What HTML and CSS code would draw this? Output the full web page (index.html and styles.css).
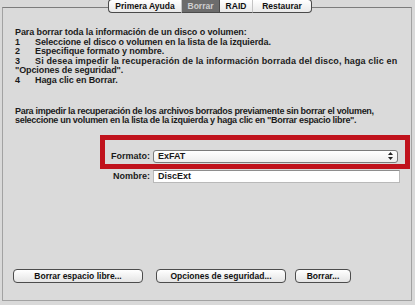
FILE: index.html
```html
<!DOCTYPE html>
<html lang="es">

<head>
    <meta charset="UTF-8">
    <title>Borrar</title>
    <link rel="stylesheet" href="styles.css">
</head>

<body>
    <div class="panel">
        <!-- segmented tabs sit on the top border -->
        <div class="tabs">
            <span class="tab tab-first">Primera Ayuda</span>
            <span class="tab tab-selected">Borrar</span>
            <span class="tab tab-raid">RAID</span>
            <span class="tab tab-last">Restaurar</span>
        </div>

        <div class="info">
            <div class="line">Para borrar toda la información de un disco o volumen:</div>
            <div class="line"><span class="num">1</span>Seleccione el disco o volumen en la lista de la izquierda.</div>
            <div class="line"><span class="num">2</span>Especifique formato y nombre.</div>
            <div class="line line-wide"><span class="num">3</span>Si desea impedir la recuperación de la información borrada del disco, haga clic en</div>
            <div class="line">"Opciones de seguridad".</div>
            <div class="line"><span class="num">4</span>Haga clic en Borrar.</div>
        </div>

        <div class="info info-second">
            <div class="line line-tight">Para impedir la recuperación de los archivos borrados previamente sin borrar el volumen,</div>
            <div class="line line-tight">seleccione un volumen en la lista de la izquierda y haga clic en "Borrar espacio libre".</div>
        </div>

        <div class="form">
            <div class="highlight">
                <div class="row">
                    <label class="label">Formato:</label>
                    <div class="select">
                        <span>ExFAT</span>
                        <svg class="arrows" width="5" height="8" viewBox="0 0 5 8">
                            <path d="M0 3 L2.5 0 L5 3 Z" fill="#222" />
                            <path d="M0 5 L2.5 8 L5 5 Z" fill="#222" />
                        </svg>
                    </div>
                </div>
            </div>
            <div class="row row-name">
                <label class="label">Nombre:</label>
                <div class="input">DiscExt</div>
            </div>
        </div>

        <div class="buttons">
            <button class="btn btn-wide">Borrar espacio libre...</button>
            <button class="btn btn-wide">Opciones de seguridad...</button>
            <button class="btn btn-small">Borrar...</button>
        </div>
    </div>
</body>

</html>
```

FILE: styles.css
```css
* {
    margin: 0;
    padding: 0;
    box-sizing: border-box;
}

body {
    width: 415px;
    height: 305px;
    overflow: hidden;
    background-color: #d9d9d9;
    font-family: "Liberation Sans", Arial, sans-serif;
    font-size: 9px;
    font-weight: bold;
    color: #1a1a1a;
}

.panel {
    display: flex;
    flex-direction: column;
    height: 294px;
    margin: 7px 3px 0 2px;
    border: 1px solid #a2a2a2;
    border-top-color: #7c7c7c;
    background-color: #dadada;
}

.tabs {
    display: flex;
    height: 14px;
    margin-top: -9px;
    margin-left: 105px;
}

.tab {
    display: flex;
    align-items: center;
    justify-content: center;
    height: 14px;
    border-top: 1px solid #4a4a4a;
    border-bottom: 1px solid #4a4a4a;
    border-right: 1px solid #c4c4c4;
    background: linear-gradient(#ffffff, #e9e9e9);
    color: #111;
    font-size: 8.5px;
}

.tab-first {
    width: 74px;
    border-left: 1px solid #4a4a4a;
    border-radius: 4px 0 0 4px;
}

.tab-selected {
    width: 38px;
    background: #6c6c6c;
    color: #cfcfcf;
    border-right-color: #4a4a4a;
}

.tab-raid {
    width: 33px;
}

.tab-last {
    width: 59px;
    border-right: 1px solid #4a4a4a;
    border-radius: 0 4px 4px 0;
}

.info {
    margin-top: 15px;
    padding-left: 12px;
    line-height: 9.6px;
    letter-spacing: -0.1px;
    white-space: nowrap;
}

.info-second {
    margin-top: 21px;
}

.line-wide {
    letter-spacing: 0.13px;
}

.line-tight {
    letter-spacing: -0.3px;
}

.num {
    display: inline-block;
    width: 20px;
}

.form {
    margin-top: 9px;
}

.highlight {
    width: 310px;
    margin-left: 97px;
    padding: 10px 7px 1px 0;
    border: 5px solid #c0121c;
}

.row {
    display: flex;
    align-items: center;
    gap: 3px;
    height: 13px;
}

.row-name {
    margin-top: 1px;
    margin-left: 102px;
}

.label {
    width: 45px;
    text-align: right;
}

.select {
    display: flex;
    align-items: center;
    justify-content: space-between;
    width: 245px;
    height: 13px;
    padding: 0 4px;
    border: 1px solid #7a7a7a;
    border-radius: 3px;
    background: linear-gradient(#ffffff, #eeeeee);
}

.input {
    display: flex;
    align-items: center;
    width: 247px;
    height: 13px;
    padding-left: 4px;
    border: 1px solid #b9b9b9;
    border-top-color: #8e8e8e;
    background-color: #ffffff;
}

.buttons {
    display: flex;
    margin-top: auto;
    margin-bottom: 17px;
    padding-left: 10px;
}

.btn {
    height: 14px;
    border: 1px solid #4c4c4c;
    border-radius: 4px;
    background: linear-gradient(#ffffff, #e4e4e4);
    font-family: "Liberation Sans", Arial, sans-serif;
    font-size: 8.5px;
    font-weight: bold;
    color: #111;
}

.btn-wide {
    width: 130px;
    margin-right: 13px;
}

.btn-wide + .btn-wide {
    margin-right: 9px;
}

.btn-small {
    width: 56px;
}
```
